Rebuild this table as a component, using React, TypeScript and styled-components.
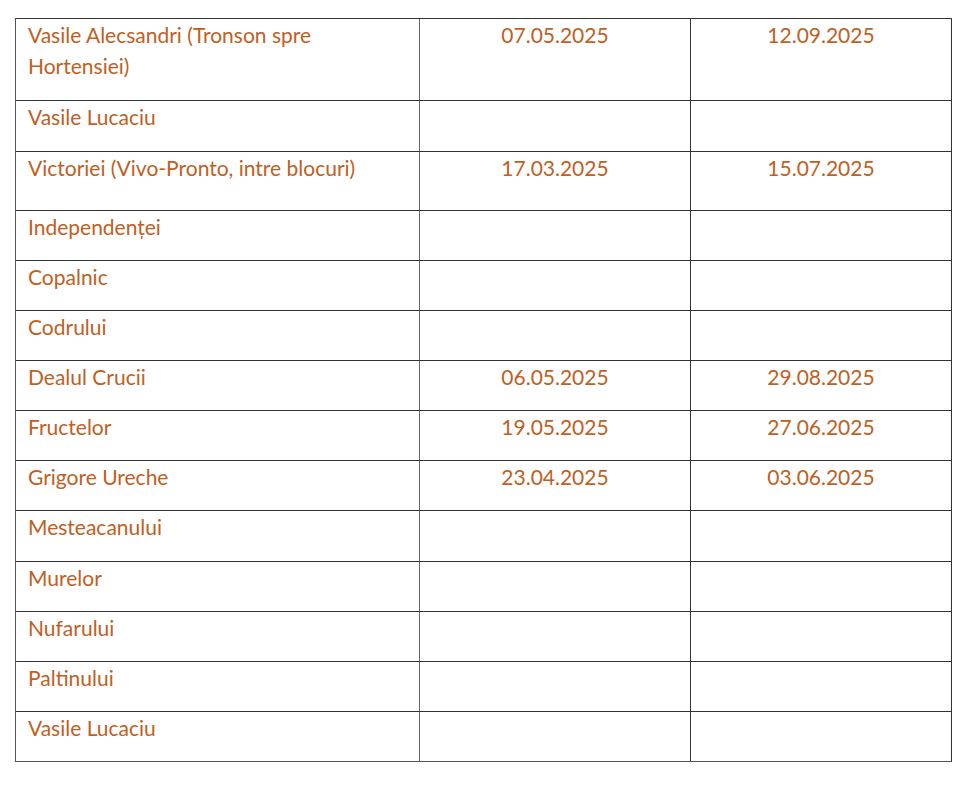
import styled, { createGlobalStyle } from "styled-components";

const rows: { name: string; start?: string; end?: string; h: number }[] = [
  { name: "Vasile Alecsandri (Tronson spre Hortensiei)", start: "07.05.2025", end: "12.09.2025", h: 81 },
  { name: "Vasile Lucaciu", h: 51 },
  { name: "Victoriei (Vivo-Pronto, intre blocuri)", start: "17.03.2025", end: "15.07.2025", h: 59 },
  { name: "Independenței", h: 50 },
  { name: "Copalnic", h: 50 },
  { name: "Codrului", h: 50 },
  { name: "Dealul Crucii", start: "06.05.2025", end: "29.08.2025", h: 50 },
  { name: "Fructelor", start: "19.05.2025", end: "27.06.2025", h: 50 },
  { name: "Grigore Ureche", start: "23.04.2025", end: "03.06.2025", h: 50 },
  { name: "Mesteacanului", h: 51 },
  { name: "Murelor", h: 50 },
  { name: "Nufarului", h: 50 },
  { name: "Paltinului", h: 50 },
  { name: "Vasile Lucaciu", h: 50 },
];

export default function App() {
  return (
    <>
      <GlobalStyle />
      <Page>
        <Table>
          {rows.map((r, i) => (
            <Row key={i} $h={r.h}>
              <NameCell>{r.name}</NameCell>
              <DateCell>{r.start}</DateCell>
              <DateCell>{r.end}</DateCell>
            </Row>
          ))}
        </Table>
      </Page>
    </>
  );
}

const GlobalStyle = createGlobalStyle`
  body {
    margin: 0;
    background: #ffffff;
  }
`;

const Page = styled.div`
  padding: 18px 0 0 15px;
`;

const Table = styled.div`
  width: 937px;
  box-sizing: border-box;
  border: 1px solid #333333;
  border-left-color: #555555;
  border-bottom-color: #555555;
  font-family: Lato, "Noto Sans", sans-serif;
  font-size: 21px;
  line-height: 31px;
  color: #c0601f;
`;

const Row = styled.div<{ $h: number }>`
  display: grid;
  grid-template-columns: 404px 270px 1fr;
  height: ${(p) => p.$h}px;
  box-sizing: border-box;

  & + & {
    border-top: 1px solid #333333;
  }
`;

const Cell = styled.div`
  padding: 0 12px;
  overflow: hidden;
`;

const NameCell = styled(Cell)`
  text-align: left;
  border-right: 1px solid #666666;
`;

const DateCell = styled(Cell)`
  text-align: center;

  & + & {
    border-left: 1px solid #333333;
  }
`;
